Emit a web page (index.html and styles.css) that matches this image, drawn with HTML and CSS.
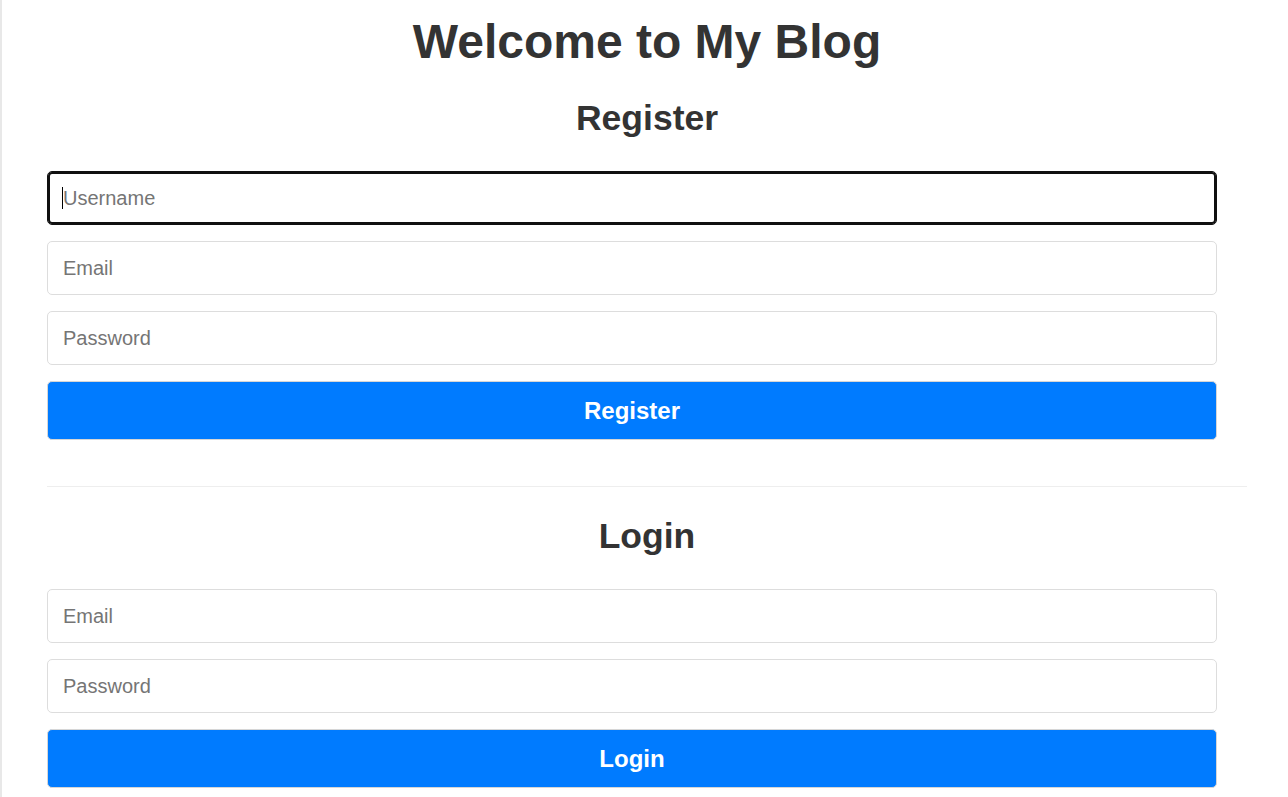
FILE: index.html
```html
<!DOCTYPE html>
<html lang="en">
<head>
<meta charset="utf-8">
<title>Welcome to My Blog</title>
<link rel="stylesheet" href="styles.css">
</head>
<body>
<div class="page">
  <main class="container">
    <h1 class="title">Welcome to My Blog</h1>
    <section class="auth">
      <h2 class="auth-title">Register</h2>
      <form class="auth-form">
        <div class="field-wrap">
          <input class="field field-focused" type="text" placeholder="Username">
          <span class="caret"></span>
        </div>
        <input class="field" type="email" placeholder="Email">
        <input class="field" type="password" placeholder="Password">
        <button class="btn" type="button">Register</button>
      </form>
    </section>
    <hr class="divider">
    <section class="auth">
      <h2 class="auth-title">Login</h2>
      <form class="auth-form">
        <input class="field" type="email" placeholder="Email">
        <input class="field" type="password" placeholder="Password">
        <button class="btn" type="button">Login</button>
      </form>
    </section>
  </main>
</div>
</body>
</html>
```

FILE: styles.css
```css
* { box-sizing: border-box; }

html, body {
  margin: 0;
  padding: 0;
  background: #ffffff;
}

body {
  font-family: "Liberation Sans", Arial, sans-serif;
  color: #333333;
}

.page {
  border-left: 2px solid #e8e8e8;
  min-height: 797px;
  padding-left: 45px;
}

.container {
  width: 1200px;
  display: flex;
  flex-direction: column;
}

.title {
  margin: 14px 0 29px;
  font-size: 48px;
  font-weight: bold;
  line-height: normal;
  text-align: center;
  color: #333333;
}

.auth {
  display: flex;
  flex-direction: column;
}

.auth-title {
  margin: 0 0 32px;
  font-size: 35.5px;
  font-weight: bold;
  line-height: normal;
  text-align: center;
  color: #333333;
}

.auth-form {
  width: 1170px;
  display: flex;
  flex-direction: column;
  gap: 16px;
}

.field-wrap {
  position: relative;
  display: flex;
}

.field {
  width: 100%;
  height: 54px;
  padding: 0 15px;
  font-family: "Liberation Sans", Arial, sans-serif;
  font-size: 20px;
  color: #333333;
  background: #ffffff;
  border: 1px solid #dddddd;
  border-radius: 5px;
  outline: none;
}

.field::placeholder {
  color: #757575;
}

.field-focused {
  border: 1px solid #101010;
  box-shadow: inset 0 0 0 2px #101010;
}

.caret {
  position: absolute;
  left: 15px;
  top: 16px;
  width: 1px;
  height: 22px;
  background: #000000;
}

.btn {
  width: 100%;
  height: 59px;
  padding: 0;
  font-family: "Liberation Sans", Arial, sans-serif;
  font-size: 24px;
  font-weight: bold;
  color: #ffffff;
  background: #007bff;
  border: 1px solid #d6d6d6;
  border-radius: 5px;
}

.divider {
  width: 1200px;
  margin: 46px 0 29px;
  border: 0;
  border-top: 1px solid #eeeeee;
  height: 0;
}
```
